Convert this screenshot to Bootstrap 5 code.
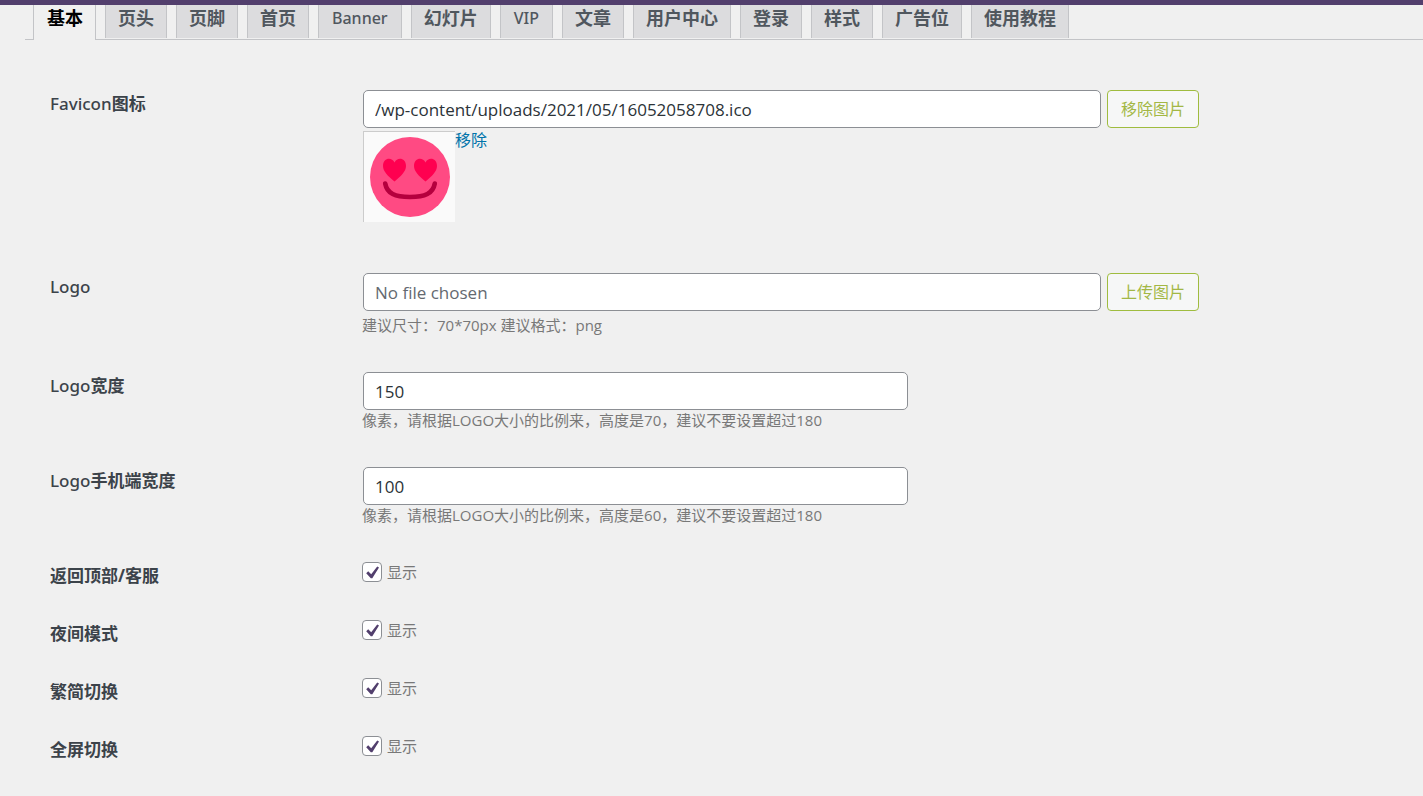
<!DOCTYPE html>
<html lang="zh-CN">
<head>
<meta charset="utf-8">
<meta name="viewport" content="width=device-width, initial-scale=1">
<title>主题设置</title>
<link href="https://cdn.jsdelivr.net/npm/bootstrap@5.3.0/dist/css/bootstrap.min.css" rel="stylesheet">
<style>
  body { background: #f0f0f0; color: #3c434a; font-family: "Open Sans", "Noto Sans CJK SC", sans-serif; font-size: 16px; }
  .top-strip { height: 5px; background: #523f6d; }
  .tab-bar { gap: 9px; margin-left: 25px; padding-left: 8px; border-bottom: 1px solid #c3c4c7; }
  .tab-bar .nav-link { height: 33px; padding: 0 12px; border: 1px solid #c3c4c7; border-width: 0 1px; border-radius: 0; background: #dcdcde; color: #50575e; font-size: 18px; font-weight: 700; line-height: 26px; }
  .tab-bar .nav-link.latin { padding: 0 13px; font-family: "Noto Sans", "Open Sans", sans-serif; font-size: 16px; font-weight: 500; }
  .tab-bar .nav-link.active { height: 35px; padding: 0 12px 0 13px; margin-bottom: -1px; background: #f0f0f0; color: #000; }
  .settings { gap: 28px; padding: 50px 50px 30px; }
  .setting-name { flex: 0 0 313px; min-height: 30px; font-size: 17px; line-height: 28px; font-weight: 700; }
  .setting-name .latin { font-family: "Noto Sans", "Open Sans", sans-serif; font-weight: 500; }
  .setting-body { min-width: 0; margin-bottom: 7px; }
  .check-row .setting-body { margin-bottom: 0; }
  .setting-input { height: 38px; padding: 0 11px; border: 1px solid #8c8f94; border-radius: 5px; color: #2c3338; font-size: 17px; background: #fff; }
  .setting-input::placeholder { color: #646970; }
  .file-row { gap: 6px; max-width: 836px; }
  .number-input { max-width: 545px; }
  .file-btn { height: 38px; padding: 0 13px; flex: none; border: 1px solid #9fbc3f; border-radius: 4px; background: #f6f7f7; color: #a3b745; font-size: 16px; }
  .help-line { color: #787878; font-size: 15px; line-height: 22px; margin-left: -1px; }
  .setting-body > .help-line { line-height: 20px; padding-bottom: 2px; }
  .preview { padding: 5px 5px 5px 6px; background: #fafafa; border: 1px solid #ccc; border-width: 1px 0 0 1px; }
  .preview-row { margin: 3px 0 16px; }
  .remove-link { color: #0073aa; font-size: 16px; line-height: 19px; }
  .setting-check { width: 20px; height: 20px; margin: 0 5px 0 -1px; border: 1px solid #8c8f94; border-radius: 5px; }
  .setting-check:checked { border-color: #8c8f94; background-color: #fff; background-size: 20px 20px; background-image: url("data:image/svg+xml,%3Csvg xmlns='http://www.w3.org/2000/svg' viewBox='0 0 20 20'%3E%3Cpath d='M17 5.600L10.300 16.200H8.800L4.200 11.200L6.200 9.300L9.200 12.200L15.200 4.400Z' fill='%23523f6d'/%3E%3C/svg%3E"); }
</style>
</head>
<body>
<div class="top-strip"></div>
<nav class="nav tab-bar" aria-label="设置">
  <a class="nav-link active" aria-current="page" href="#">基本</a>
  <a class="nav-link" href="#">页头</a>
  <a class="nav-link" href="#">页脚</a>
  <a class="nav-link" href="#">首页</a>
  <a class="nav-link latin" href="#">Banner</a>
  <a class="nav-link" href="#">幻灯片</a>
  <a class="nav-link latin" href="#">VIP</a>
  <a class="nav-link" href="#">文章</a>
  <a class="nav-link" href="#">用户中心</a>
  <a class="nav-link" href="#">登录</a>
  <a class="nav-link" href="#">样式</a>
  <a class="nav-link" href="#">广告位</a>
  <a class="nav-link" href="#">使用教程</a>
</nav>
<form class="settings d-flex flex-column">
  <div class="d-flex">
    <label class="setting-name" for="favicon"><span class="latin">Favicon</span>图标</label>
    <div class="setting-body flex-grow-1">
      <div class="file-row d-flex">
        <input class="setting-input form-control" type="text" id="favicon" value="/wp-content/uploads/2021/05/16052058708.ico">
        <button class="file-btn" type="button">移除图片</button>
      </div>
      <div class="preview-row d-flex align-items-start">
        <div class="preview">
          <svg class="d-block" width="80" height="80" viewBox="0 0 80 80" role="img" aria-label="Favicon">
            <circle cx="40" cy="40" r="40" fill="#ff4a83"/>
            <path d="M24.500 44.500C18 39 13 34.500 13 29C13 21 21.500 19.500 24.500 25.500C27.500 19.500 36 21 36 29C36 34.500 31 39 24.500 44.500Z" fill="#ff0050"/>
            <path d="M55.500 44.500C49 39 44 34.500 44 29C44 21 52.500 19.500 55.500 25.500C58.500 19.500 67 21 67 29C67 34.500 62 39 55.500 44.500Z" fill="#ff0050"/>
            <path d="M15.200 46.500C17 56.500 25 60 40 60C55 60 63 56.500 64.800 46.500" fill="none" stroke="#b5003e" stroke-width="4.600" stroke-linecap="round"/>
          </svg>
        </div>
        <a class="remove-link text-decoration-none" href="#">移除</a>
      </div>
    </div>
  </div>
  <div class="d-flex">
    <label class="setting-name" for="logo"><span class="latin">Logo</span></label>
    <div class="setting-body flex-grow-1">
      <div class="file-row d-flex mb-1">
        <input class="setting-input form-control" type="text" id="logo" placeholder="No file chosen">
        <button class="file-btn" type="button">上传图片</button>
      </div>
      <div class="help-line">建议尺寸：70*70px 建议格式：png</div>
    </div>
  </div>
  <div class="d-flex">
    <label class="setting-name" for="logo-width"><span class="latin">Logo</span>宽度</label>
    <div class="setting-body flex-grow-1">
      <input class="setting-input number-input form-control" type="text" id="logo-width" value="150">
      <div class="help-line">像素，请根据LOGO大小的比例来，高度是70，建议不要设置超过180</div>
    </div>
  </div>
  <div class="d-flex">
    <label class="setting-name" for="logo-mobile"><span class="latin">Logo</span>手机端宽度</label>
    <div class="setting-body flex-grow-1">
      <input class="setting-input number-input form-control" type="text" id="logo-mobile" value="100">
      <div class="help-line">像素，请根据LOGO大小的比例来，高度是60，建议不要设置超过180</div>
    </div>
  </div>
  <div class="check-row d-flex">
    <div class="setting-name">返回顶部/客服</div>
    <div class="setting-body d-flex align-items-start">
      <input class="setting-check form-check-input" type="checkbox" id="back-top" checked>
      <label class="help-line ms-0" for="back-top">显示</label>
    </div>
  </div>
  <div class="check-row d-flex">
    <div class="setting-name">夜间模式</div>
    <div class="setting-body d-flex align-items-start">
      <input class="setting-check form-check-input" type="checkbox" id="night" checked>
      <label class="help-line ms-0" for="night">显示</label>
    </div>
  </div>
  <div class="check-row d-flex">
    <div class="setting-name">繁简切换</div>
    <div class="setting-body d-flex align-items-start">
      <input class="setting-check form-check-input" type="checkbox" id="script-switch" checked>
      <label class="help-line ms-0" for="script-switch">显示</label>
    </div>
  </div>
  <div class="check-row d-flex">
    <div class="setting-name">全屏切换</div>
    <div class="setting-body d-flex align-items-start">
      <input class="setting-check form-check-input" type="checkbox" id="fullscreen" checked>
      <label class="help-line ms-0" for="fullscreen">显示</label>
    </div>
  </div>
</form>
<script src="https://cdn.jsdelivr.net/npm/bootstrap@5.3.0/dist/js/bootstrap.bundle.min.js"></script>
</body>
</html>
